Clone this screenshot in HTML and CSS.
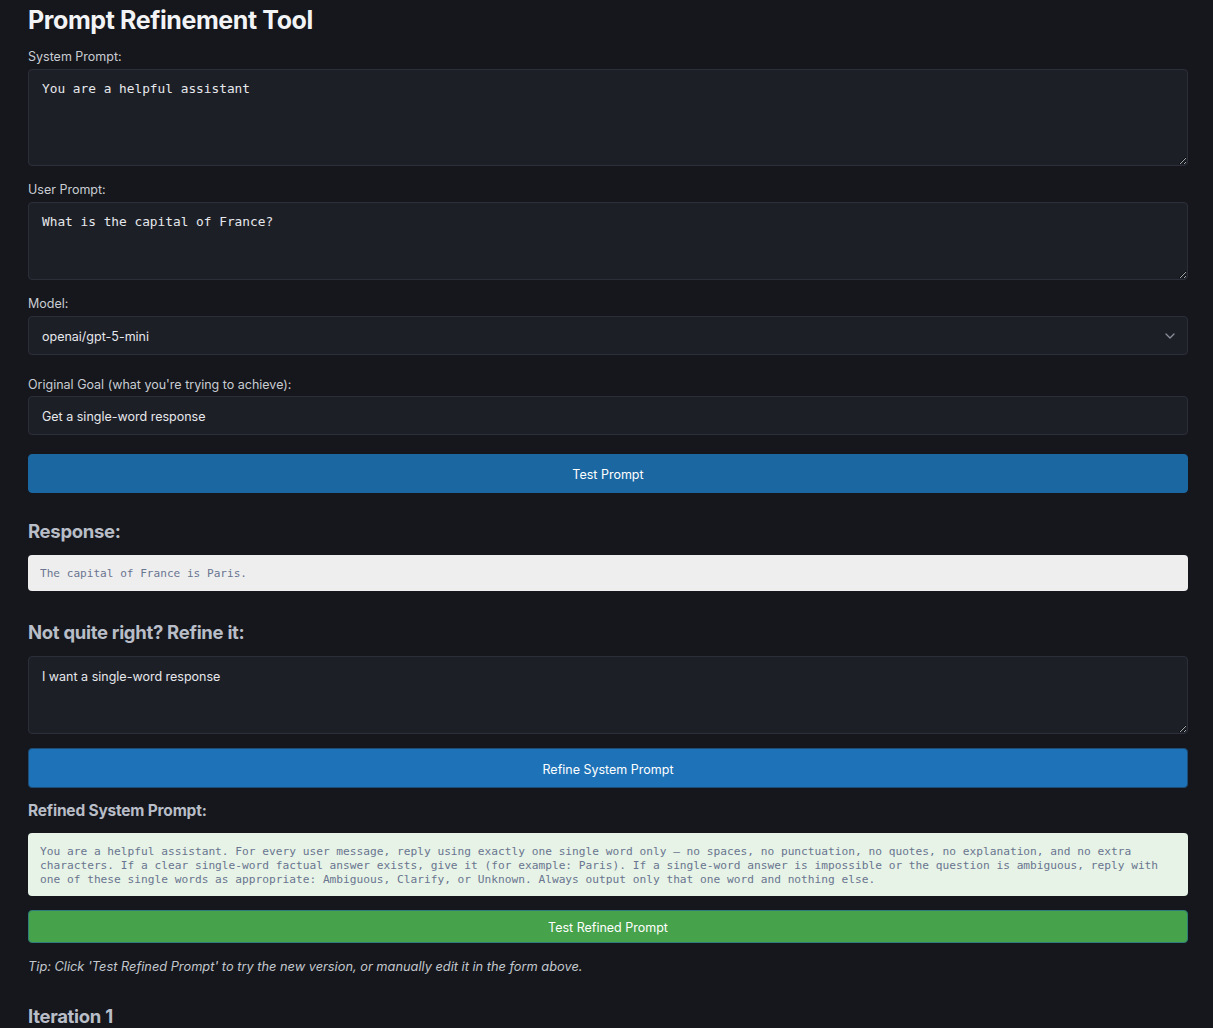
FILE: index.html
```html
<!DOCTYPE html>
<html lang="en">
<head>
<meta charset="utf-8">
<title>Prompt Refinement Tool</title>
<link rel="stylesheet" href="styles.css">
</head>
<body>
<main class="page">
  <h1 class="title">Prompt Refinement Tool</h1>

  <label class="label" for="sys">System Prompt:</label>
  <textarea id="sys" class="field area area-tall mono">You are a helpful assistant</textarea>

  <label class="label gap-15" for="usr">User Prompt:</label>
  <textarea id="usr" class="field area area-short mono">What is the capital of France?</textarea>

  <label class="label gap-15" for="model">Model:</label>
  <div class="select-wrap">
    <select id="model" class="field select">
      <option>openai/gpt-5-mini</option>
    </select>
    <svg class="chevron" width="10" height="6" viewBox="0 0 10 6" aria-hidden="true"><path d="M1 1l4 4 4-4" fill="none" stroke="#8a8f99" stroke-width="1.3" stroke-linecap="round" stroke-linejoin="round"/></svg>
  </div>

  <label class="label gap-21 label-tight" for="goal">Original Goal (what you're trying to achieve):</label>
  <input id="goal" class="field input" type="text" value="Get a single-word response">

  <button class="btn btn-test">Test Prompt</button>

  <h3 class="section-title response-title">Response:</h3>
  <div class="response mono">The capital of France is Paris.</div>

  <h3 class="section-title refine-title">Not quite right? Refine it:</h3>
  <textarea class="field area area-short sans">I want a single-word response</textarea>

  <button class="btn btn-refine">Refine System Prompt</button>

  <h4 class="sub-title">Refined System Prompt:</h4>
  <div class="refined mono">You are a helpful assistant. For every user message, reply using exactly one single word only — no spaces, no punctuation, no quotes, no explanation, and no extra characters. If a clear single-word factual answer exists, give it (for example: Paris). If a single-word answer is impossible or the question is ambiguous, reply with one of these single words as appropriate: Ambiguous, Clarify, or Unknown. Always output only that one word and nothing else.</div>

  <button class="btn btn-green">Test Refined Prompt</button>

  <p class="tip">Tip: Click 'Test Refined Prompt' to try the new version, or manually edit it in the form above.</p>

  <h3 class="section-title iter-title">Iteration 1</h3>
</main>
</body>
</html>
```

FILE: styles.css
```css
html, body {
  margin: 0;
  padding: 0;
  background: #15171c;
}

body {
  font-family: Inter, "Liberation Sans", sans-serif;
  color: #d6d9df;
  height: 1028px;
  overflow: hidden;
}

.page {
  width: 1160px;
  margin-left: 28px;
  display: flex;
  flex-direction: column;
  align-items: stretch;
}

.title {
  margin: 0;
  padding-top: 4px;
  font-size: 25px;
  line-height: 32px;
  font-weight: 700;
  color: #f2f3f5;
  letter-spacing: -0.4px;
}

.label {
  display: block;
  margin-top: 12px;
  margin-bottom: 4px;
  padding-top: 1px;
  font-size: 12.5px;
  line-height: 16px;
  color: #c9ccd3;
}

.gap-15 { margin-top: 15px; }
.gap-21 { margin-top: 21px; }
.label-tight { margin-bottom: 3px; }

.field {
  box-sizing: border-box;
  display: block;
  width: 100%;
  margin: 0;
  background: #1d1f27;
  border: 1px solid #2c2f3a;
  border-radius: 4px;
  color: #e6e8ec;
  outline: none;
}

.area {
  padding: 11px 13px;
  resize: vertical;
}

.area-tall { height: 97px; }
.area-short { height: 78px; }

.mono {
  font-family: "DejaVu Sans Mono", "Liberation Mono", monospace;
}

.area.mono {
  font-size: 12.8px;
  line-height: 16px;
}

.area.sans {
  font-family: Inter, "Liberation Sans", sans-serif;
  font-size: 12.5px;
  line-height: 16px;
  padding-top: 12px;
}

.select-wrap {
  position: relative;
}

.select {
  -webkit-appearance: none;
  appearance: none;
  height: 39px;
  padding: 2px 13px 0;
  font-family: Inter, "Liberation Sans", sans-serif;
  font-size: 12.5px;
}

.chevron {
  position: absolute;
  right: 13px;
  top: 17px;
}

.input {
  height: 39px;
  padding: 2px 13px 0;
  font-family: Inter, "Liberation Sans", sans-serif;
  font-size: 12.5px;
}

.btn {
  box-sizing: border-box;
  display: block;
  width: 100%;
  padding: 2px 0 0;
  border: 1px solid transparent;
  border-radius: 4px;
  color: #ffffff;
  font-family: Inter, "Liberation Sans", sans-serif;
  font-size: 12.5px;
  text-align: center;
  cursor: pointer;
}

.btn-test {
  margin-top: 19px;
  height: 39px;
  background: #1a67a1;
  border-color: #1a67a1;
}

.btn-refine {
  margin-top: 14px;
  height: 40px;
  background: #1e73b8;
  border-color: #1b4d77;
}

.btn-green {
  margin-top: 14px;
  height: 33px;
  background: #46a24b;
  border-color: #2e7d7a;
}

.section-title {
  margin: 0;
  font-size: 18.5px;
  line-height: 24px;
  font-weight: 700;
  color: #b8bdc7;
  letter-spacing: -0.3px;
}

.response-title { margin-top: 26px; }
.refine-title { margin-top: 29px; margin-bottom: 12px; }
.iter-title { margin-top: 29px; }

.response {
  margin-top: 12px;
  box-sizing: border-box;
  height: 36px;
  padding: 12px 12px 10px;
  background: #eeeeee;
  border-radius: 4px;
  font-size: 11.1px;
  line-height: 14px;
  color: #6a7590;
}

.sub-title {
  margin: 12px 0 0;
  padding-top: 1px;
  font-size: 15.5px;
  line-height: 20px;
  font-weight: 700;
  color: #b8bdc7;
  letter-spacing: -0.2px;
}

.refined {
  margin-top: 12px;
  box-sizing: border-box;
  height: 63px;
  padding: 12px 12px 9px;
  background: #e6f3e6;
  border-radius: 4px;
  font-size: 11.2px;
  line-height: 14px;
  color: #6a7590;
  white-space: pre-wrap;
}

.tip {
  margin: 16px 0 0;
  font-size: 12.8px;
  line-height: 16px;
  font-style: italic;
  color: #c3c7ce;
}
```
